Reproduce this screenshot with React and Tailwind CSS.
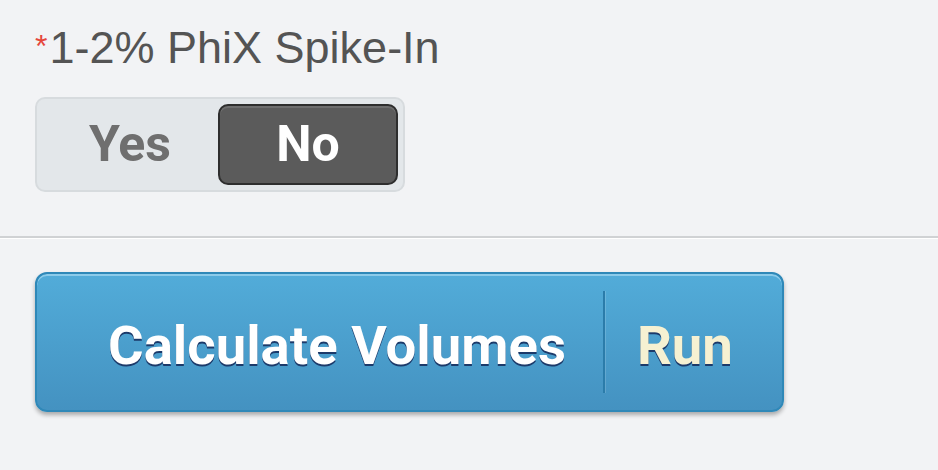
import React, { useState } from "react";

const App = () => {
  const [spike, setSpike] = useState("no");

  return (
    <div className="w-full h-[470px] bg-[#f2f3f5] overflow-hidden font-['Liberation_Sans',Arial,sans-serif]">
      <div className="pl-[35px] pt-[25px]">
        <label className="flex items-start text-[45px] leading-none text-[#545454]">
          <span className="text-[#e5473c] text-[32px] leading-none mt-[5px] mr-[2px]">*</span>
          1-2% PhiX Spike-In
        </label>

        <div className="mt-[27px] w-[370px] h-[95px] flex items-center p-[5px] rounded-[10px] border-2 border-[#d7dbde] bg-[#e3e7ea] font-['Roboto',sans-serif] font-bold text-[50px]">
          <button
            onClick={() => setSpike("yes")}
            className={
              spike === "yes"
                ? "flex-1 h-full flex items-center justify-center rounded-[10px] border-2 border-[#2e2e2e] bg-[#5b5b5b] text-white shadow-[inset_0_2px_0_#6e6e6e]"
                : "flex-1 h-full flex items-center justify-center text-[#6f6f6f]"
            }
          >
            Yes
          </button>
          <button
            onClick={() => setSpike("no")}
            className={
              spike === "no"
                ? "flex-1 h-full flex items-center justify-center rounded-[10px] border-2 border-[#2e2e2e] bg-[#5b5b5b] text-white shadow-[inset_0_2px_0_#6e6e6e]"
                : "flex-1 h-full flex items-center justify-center text-[#6f6f6f]"
            }
          >
            No
          </button>
        </div>
      </div>

      <div className="mt-[44px] border-t-2 border-[#d0d2d4] shadow-[0_1px_0_#ffffff]" />

      <div className="pl-[35px] pt-[34px]">
        <button className="w-[749px] h-[140px] pt-[8px] flex items-center rounded-[12px] border-2 border-[#2f88b8] bg-gradient-to-b from-[#52acd9] to-[#4492c1] shadow-[inset_0_2px_0_#8ccbea,0_3px_4px_rgba(0,0,0,0.3)] font-['Roboto',sans-serif] font-bold text-[54.5px] [text-shadow:0_2px_0_#1c3a6a]">
          <span className="pl-[71px] pr-[37px] text-white">Calculate Volumes</span>
          <span className="w-[2px] h-[102px] -mt-[8px] bg-[#2b7caa] shadow-[1px_0_0_rgba(255,255,255,0.15)]" />
          <span className="pl-[32px] text-[#f6f1d2]">Run</span>
        </button>
      </div>
    </div>
  );
};

export default App;
